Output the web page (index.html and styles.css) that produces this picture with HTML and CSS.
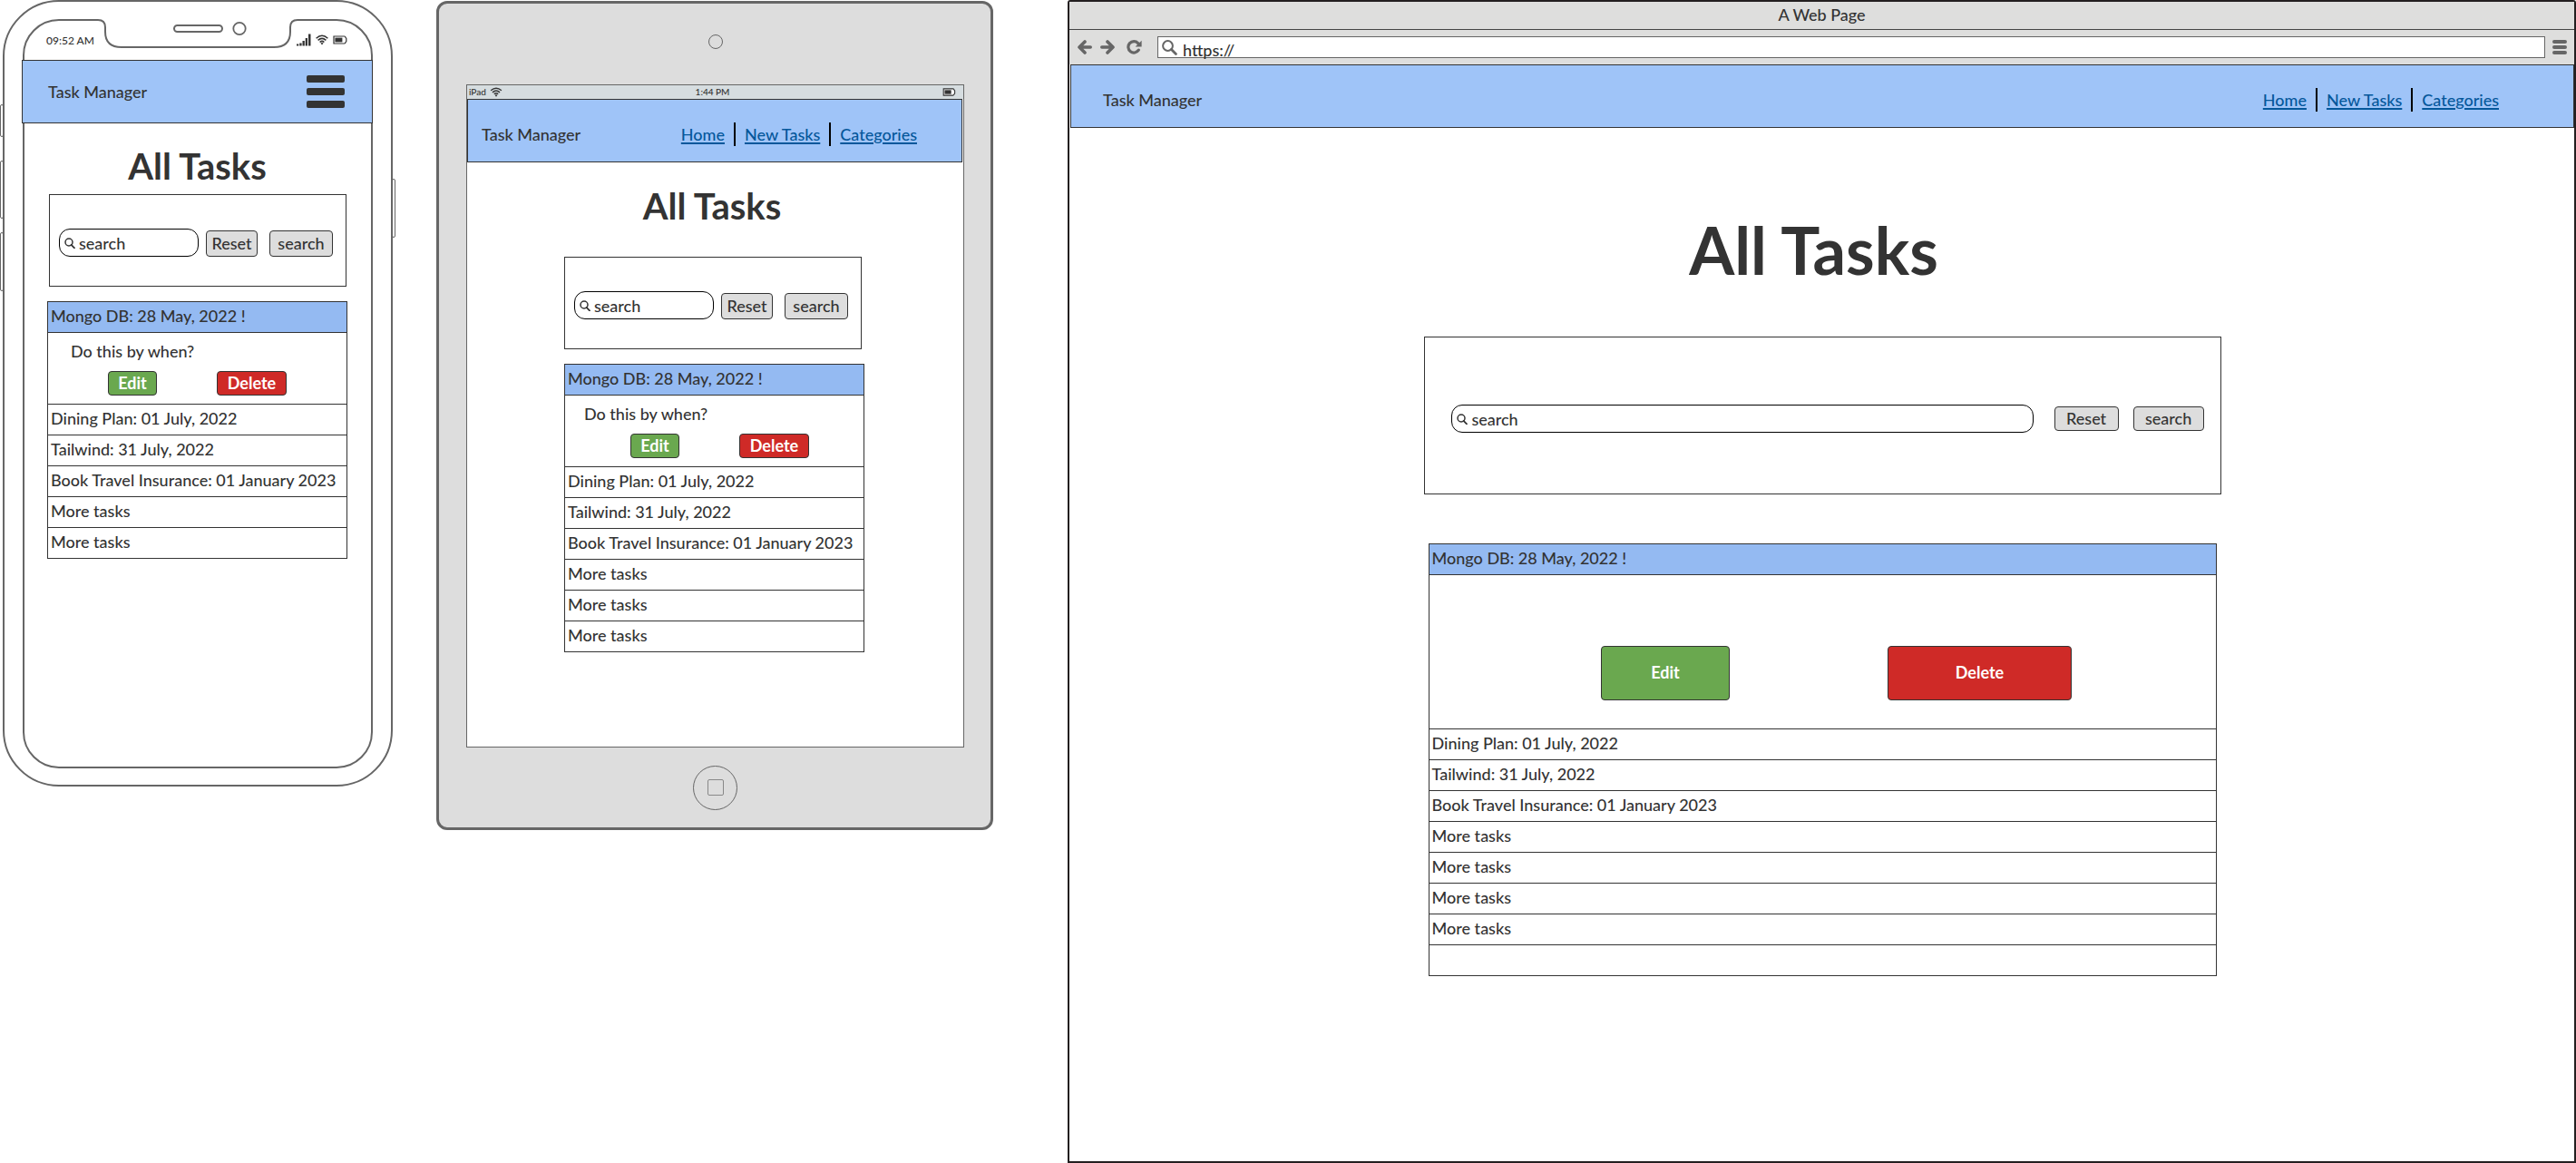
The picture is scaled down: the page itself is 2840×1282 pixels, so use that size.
FILE: index.html
```html
<!DOCTYPE html>
<html lang="en">
<head>
<meta charset="utf-8">
<title>Task Manager wireframes</title>
<link rel="stylesheet" href="styles.css">
</head>
<body>
<svg class="sprite" aria-hidden="true">
  <symbol id="wifi" viewBox="0 0 14 12">
    <g fill="none" stroke="#333" stroke-width="1.5">
      <path d="M.6 4.2Q7-1.6 13.4 4.2"/><path d="M2.6 6.4Q7 2.4 11.4 6.4"/><path d="M4.6 8.5Q7 6.3 9.4 8.5"/>
    </g>
    <path d="M5.4 9.6Q7 8.4 8.6 9.6L7 11.6Z" fill="#333"/>
  </symbol>
  <symbol id="battery" viewBox="0 0 16 10">
    <path d="M1 1H12.6Q14 1 14 2.4L14.8 3.4V6.6L14 7.6Q14 9 12.6 9H1Z" fill="#fff" stroke="#333" stroke-width="1.2"/>
    <rect x="2.4" y="2.6" width="8" height="4.8" fill="#333"/>
  </symbol>
  <symbol id="lens" viewBox="0 0 12 12">
    <circle cx="5" cy="5" r="4" fill="none" stroke="#333" stroke-width="1.5"/>
    <path d="M7.6 7.8L11 11.3" stroke="#333" stroke-width="1.8" stroke-linecap="round"/>
  </symbol>
</svg>

<div class="board">

  <section class="phone">
    <span class="key key-mute"></span><span class="key key-up"></span><span class="key key-down"></span><span class="key key-power"></span>
    <svg class="notch" width="224" height="34" viewBox="0 0 224 34" aria-hidden="true">
      <path d="M1 0V3H2Q10 3 10 11V16Q10 33 28 33H196Q214 33 214 16V11Q214 3 222 3H223V0Z" fill="#fff"/>
      <path d="M0 3H2Q10 3 10 11V16Q10 33 28 33H196Q214 33 214 16V11Q214 3 222 3H224" fill="none" stroke="#666" stroke-width="2"/>
      <rect x="86" y="9" width="53" height="7" rx="3.5" fill="none" stroke="#666" stroke-width="2"/>
      <circle cx="158" cy="12.500" r="6.700" fill="none" stroke="#666" stroke-width="1.800"/>
    </svg>
    <div class="phone-screen">
      <div class="phone-status">
        <span>09:52 AM</span>
        <span class="status-icons">
          <svg width="16" height="14" viewBox="0 0 16 14"><path d="M0 11.500H2.300V13.500H0ZM3.300 10.500H5.600V13.500H3.300ZM6.500 8H8.800V13.500H6.500ZM9.700 5H12V13.500H9.700ZM13 .5H15.500V13.500H13Z" fill="#333"/></svg>
          <svg width="14" height="12"><use href="#wifi"/></svg>
          <svg width="16" height="10"><use href="#battery"/></svg>
        </span>
      </div>
      <header class="topbar">
        <span>Task Manager</span>
        <button class="burger" type="button" aria-label="Menu"><i></i><i></i><i></i></button>
      </header>
      <main class="content">
        <h1>All Tasks</h1>
        <form class="search">
          <label class="field"><svg width="12" height="12"><use href="#lens"/></svg><input type="text" placeholder="search" aria-label="Search tasks"></label>
          <button class="btn btn-reset" type="reset">Reset</button>
          <button class="btn btn-search" type="button">search</button>
        </form>
        <ul class="tasks">
          <li class="active">Mongo DB: 28 May, 2022 !</li>
          <li class="detail">
            <p>Do this by when?</p>
            <div class="actions"><button class="btn edit" type="button">Edit</button><button class="btn delete" type="button">Delete</button></div>
          </li>
          <li>Dining Plan: 01 July, 2022</li>
          <li>Tailwind: 31 July, 2022</li>
          <li>Book Travel Insurance: 01 January 2023</li>
          <li>More tasks</li>
          <li>More tasks</li>
        </ul>
      </main>
    </div>
  </section>

  <section class="tablet">
    <div class="bezel bezel-top"><span class="camera"></span></div>
    <div class="tablet-screen">
      <div class="tablet-status">
        <span class="carrier">iPad <svg width="14" height="11"><use href="#wifi"/></svg></span>
        <span>1:44 PM</span>
        <svg class="charge" width="15" height="9"><use href="#battery"/></svg>
      </div>
      <header class="topbar">
        <span>Task Manager</span>
        <nav><a href="#">Home</a><a href="#">New Tasks</a><a href="#">Categories</a></nav>
      </header>
      <main class="content">
        <h1>All Tasks</h1>
        <form class="search">
          <label class="field"><svg width="12" height="12"><use href="#lens"/></svg><input type="text" placeholder="search" aria-label="Search tasks"></label>
          <button class="btn btn-reset" type="reset">Reset</button>
          <button class="btn btn-search" type="button">search</button>
        </form>
        <ul class="tasks">
          <li class="active">Mongo DB: 28 May, 2022 !</li>
          <li class="detail">
            <p>Do this by when?</p>
            <div class="actions"><button class="btn edit" type="button">Edit</button><button class="btn delete" type="button">Delete</button></div>
          </li>
          <li>Dining Plan: 01 July, 2022</li>
          <li>Tailwind: 31 July, 2022</li>
          <li>Book Travel Insurance: 01 January 2023</li>
          <li>More tasks</li>
          <li>More tasks</li>
          <li>More tasks</li>
        </ul>
      </main>
    </div>
    <div class="bezel"><span class="home"><i></i></span></div>
  </section>

  <section class="browser">
    <div class="titlebar">A Web Page</div>
    <div class="toolbar">
      <button class="tool" type="button" aria-label="Back"><svg width="16" height="16" viewBox="0 0 16 16"><path d="M8 2L2 8L8 14M2.500 8H14.200" fill="none" stroke="#666" stroke-width="3.600" stroke-linecap="round" stroke-linejoin="round"/></svg></button>
      <button class="tool" type="button" aria-label="Forward"><svg width="16" height="16" viewBox="0 0 16 16"><path d="M8 2L14 8L8 14M13.500 8H1.800" fill="none" stroke="#666" stroke-width="3.600" stroke-linecap="round" stroke-linejoin="round"/></svg></button>
      <button class="tool reload" type="button" aria-label="Reload"><svg width="17" height="16" viewBox="0 0 17 16"><path d="M13.300 11.200A6.200 6.200 0 1 1 12.600 3.600" fill="none" stroke="#666" stroke-width="3.200" stroke-linecap="round"/><path d="M16.600 .8V7.600H9.600Z" fill="#666"/></svg></button>
      <label class="url"><svg width="17" height="17" viewBox="0 0 17 17"><circle cx="6.500" cy="6.500" r="5.400" fill="none" stroke="#666" stroke-width="2"/><path d="M10.500 10.500L15.400 15.400" stroke="#666" stroke-width="2.800" stroke-linecap="round"/></svg><input type="text" value="https://" aria-label="Address"></label>
      <button class="tool" type="button" aria-label="Menu"><svg width="16" height="16" viewBox="0 0 16 16"><path d="M2 2H14M2 8H14M2 14H14" stroke="#666" stroke-width="4" stroke-linecap="round"/></svg></button>
    </div>
    <header class="topbar">
      <span>Task Manager</span>
      <nav><a href="#">Home</a><a href="#">New Tasks</a><a href="#">Categories</a></nav>
    </header>
    <main class="content">
      <h1>All Tasks</h1>
      <form class="search">
        <label class="field"><svg width="12" height="12"><use href="#lens"/></svg><input type="text" placeholder="search" aria-label="Search tasks"></label>
        <button class="btn btn-reset" type="reset">Reset</button>
        <button class="btn btn-search" type="button">search</button>
      </form>
      <ul class="tasks">
        <li class="active">Mongo DB: 28 May, 2022 !</li>
        <li class="detail">
          <div class="actions"><button class="btn edit" type="button">Edit</button><button class="btn delete" type="button">Delete</button></div>
        </li>
        <li>Dining Plan: 01 July, 2022</li>
        <li>Tailwind: 31 July, 2022</li>
        <li>Book Travel Insurance: 01 January 2023</li>
        <li>More tasks</li>
        <li>More tasks</li>
        <li>More tasks</li>
        <li>More tasks</li>
        <li></li>
      </ul>
    </main>
  </section>

</div>
</body>
</html>
```

FILE: styles.css
```css
*, *::before, *::after { box-sizing: border-box; }

body {
  margin: 0;
  background: #fff;
  color: #333;
  font: 500 18px/22px Lato, sans-serif;
}

.sprite { display: none; }
svg { display: block; flex: none; }
h1, p, ul { margin: 0; padding: 0; }
ul { list-style: none; }
button, input { font: inherit; color: inherit; margin: 0; padding: 0; }

.board {
  display: flex;
  align-items: flex-start;
  min-height: 100vh;
}

/* Shared page parts */
.topbar {
  display: flex;
  align-items: center;
  justify-content: space-between;
  height: 70px;
  border: 1px solid #333;
  background: #9fc4f8;
}

.topbar nav { display: flex; }
.topbar a {
  color: #04579b;
  text-decoration: underline 2px;
  text-underline-offset: 2px;
  padding: 2px 10px;
}
.topbar a + a { border-left: 2px solid #000; }

h1 {
  font-size: 40px;
  line-height: 48px;
  font-weight: 700;
  text-align: center;
}

.search {
  display: flex;
  align-items: flex-end;
  padding: 37px 14px 32px 10px;
  border: 1px solid #333;
}

.field {
  display: flex;
  flex: 1;
  align-items: center;
  gap: 4px;
  min-width: 0;
  height: 31px;
  padding: 0 5px;
  border: 1px solid #000;
  border-radius: 12px;
}
.field input, .url input {
  flex: 1;
  min-width: 0;
  border: 0;
  outline: 0;
  background: none;
}
.field input::placeholder { color: #333; opacity: 1; }

.btn {
  height: 29px;
  padding-bottom: 2px;
  border: 1px solid #333;
  border-radius: 4px;
  background: #ddd;
}
.btn-reset { width: 57px; margin: 0 13px 0 8px; }
.btn-search { width: 70px; }

.tasks {
  margin-top: 16px;
  border: 1px solid #333;
  border-bottom: 0;
}
.tasks li {
  height: 34px;
  padding: 4px 3px;
  border-bottom: 1px solid #333;
}
.tasks .active { background: #94baf2; }
.tasks .detail { height: auto; padding: 9px 0; }
.detail p { padding-left: 25px; }
.actions {
  display: flex;
  justify-content: center;
  gap: 66px;
  margin-top: 11px;
}
.edit, .delete {
  height: 27px;
  color: #fff;
  font-weight: 700;
}
.edit { width: 54px; background: #6aa84f; }
.delete { width: 77px; background: #cf2a27; }

/* Phone */
.phone {
  position: relative;
  flex: none;
  width: 430px;
  margin-left: 3px;
  padding: 19px 20px 18px;
  border: 2px solid #666;
  border-radius: 62px;
}
.phone-screen {
  min-height: 826px;
  border: 2px solid #666;
  border-radius: 40px;
}
.notch { position: absolute; top: 17px; left: 101px; }

.key {
  position: absolute;
  left: -5px;
  width: 4px;
  border: 1px solid #666;
  border-radius: 2px;
}
.key-mute { top: 113px; height: 36px; }
.key-up { top: 175px; height: 64px; }
.key-down { top: 254px; height: 65px; }
.key-power { top: 195px; left: auto; right: -5px; height: 65px; }

.phone-status {
  display: flex;
  align-items: center;
  justify-content: space-between;
  height: 43px;
  padding: 1px 26px 0 24px;
  font-size: 12px;
}
.status-icons { display: flex; align-items: center; gap: 5px; padding-bottom: 2px; }

.phone .topbar { margin: 0 -2px 0 -3px; padding: 0 30px 0 28px; }
.burger {
  display: flex;
  flex-direction: column;
  gap: 6px;
  width: 42px;
  border: 0;
  background: none;
}
.burger i { width: 100%; height: 8px; border-radius: 2px; background: #333; }

.phone .content { padding: 0 26px 0 25px; }
.phone h1 { margin: 23px 0 7px; }
.phone .search { margin: 0 1px 0 2px; }

/* Tablet */
.tablet {
  flex: none;
  width: 614px;
  margin: 1px 0 0 48px;
  padding: 0 29px 0 30px;
  border: 3px solid #666;
  border-radius: 12px;
  background: #ddd;
}
.bezel {
  display: flex;
  align-items: center;
  justify-content: center;
  height: 88px;
}
.bezel-top { height: 89px; padding-bottom: 5px; }
.camera {
  width: 16px;
  height: 16px;
  border: 1px solid #666;
  border-radius: 50%;
}
.home {
  display: flex;
  align-items: center;
  justify-content: center;
  width: 49px;
  height: 49px;
  border: 1px solid #666;
  border-radius: 50%;
}
.home i { width: 18px; height: 18px; border: 1px solid #888; border-radius: 2px; }

.tablet-screen {
  min-height: 731px;
  border: 1px solid #666;
  background: #fff;
}
.tablet-status {
  display: grid;
  grid-template-columns: 1fr auto 1fr;
  align-items: center;
  height: 15px;
  padding: 0 8px 0 2px;
  background: #d6dde0;
  font-size: 10px;
  line-height: 15px;
}
.carrier { display: flex; align-items: center; gap: 4px; }
.charge { justify-self: end; }

.tablet .topbar { margin-right: 1px; padding: 8px 39px 0 15px; }
.tablet .content { padding: 0 109px 0 107px; }
.tablet h1 { margin: 24px 0 32px; padding-right: 5px; }
.tablet .search { margin-right: 3px; }
.tablet .detail p { padding-left: 21px; }
.tablet .actions { padding-left: 12px; }

/* Browser window */
.browser {
  flex: 1;
  min-width: 0;
  min-height: 100vh;
  margin-left: 82px;
  border: 2px solid #231f20;
  border-radius: 3px 3px 0 0;
}
.titlebar {
  height: 31px;
  border-bottom: 1px solid #444;
  background: #dededd;
  line-height: 28px;
  text-align: center;
}
.toolbar {
  display: flex;
  align-items: center;
  height: 38px;
  padding: 0 8px 0 9px;
  background: #dededd;
}
.tool { border: 0; background: none; margin-right: 9px; }
.tool:last-child { margin: 0 0 0 8px; }
.reload { margin: 0 17px 0 4px; }
.url {
  display: flex;
  flex: 1;
  align-items: center;
  gap: 6px;
  height: 24px;
  padding-left: 4px;
  border: 1px solid #666;
  background: #fff;
}
.url input { padding-top: 6px; }

.browser .topbar { margin-left: 1px; padding: 8px 72px 0 35px; }
.browser .content { padding-left: 2px; }
.browser h1 {
  margin: 92px 0 54px;
  padding-right: 20px;
  font-size: 72px;
  line-height: 84px;
}
.browser .search {
  width: 53%;
  margin: 0 auto;
  padding: 74px 18px 67px 29px;
  align-items: center;
}
.browser .search .btn { height: 27px; }
.browser .btn-reset { width: 71px; margin: 0 16px 0 23px; }
.browser .btn-search { width: 78px; }
.browser .tasks { width: 52.5%; margin: 54px auto 0; }
.browser .detail { padding: 78px 0 31px; }
.browser .actions { gap: 174px; margin: 0; padding-left: 30px; }
.browser .edit, .browser .delete { height: 60px; }
.browser .edit { width: 142px; }
.browser .delete { width: 203px; }
```
